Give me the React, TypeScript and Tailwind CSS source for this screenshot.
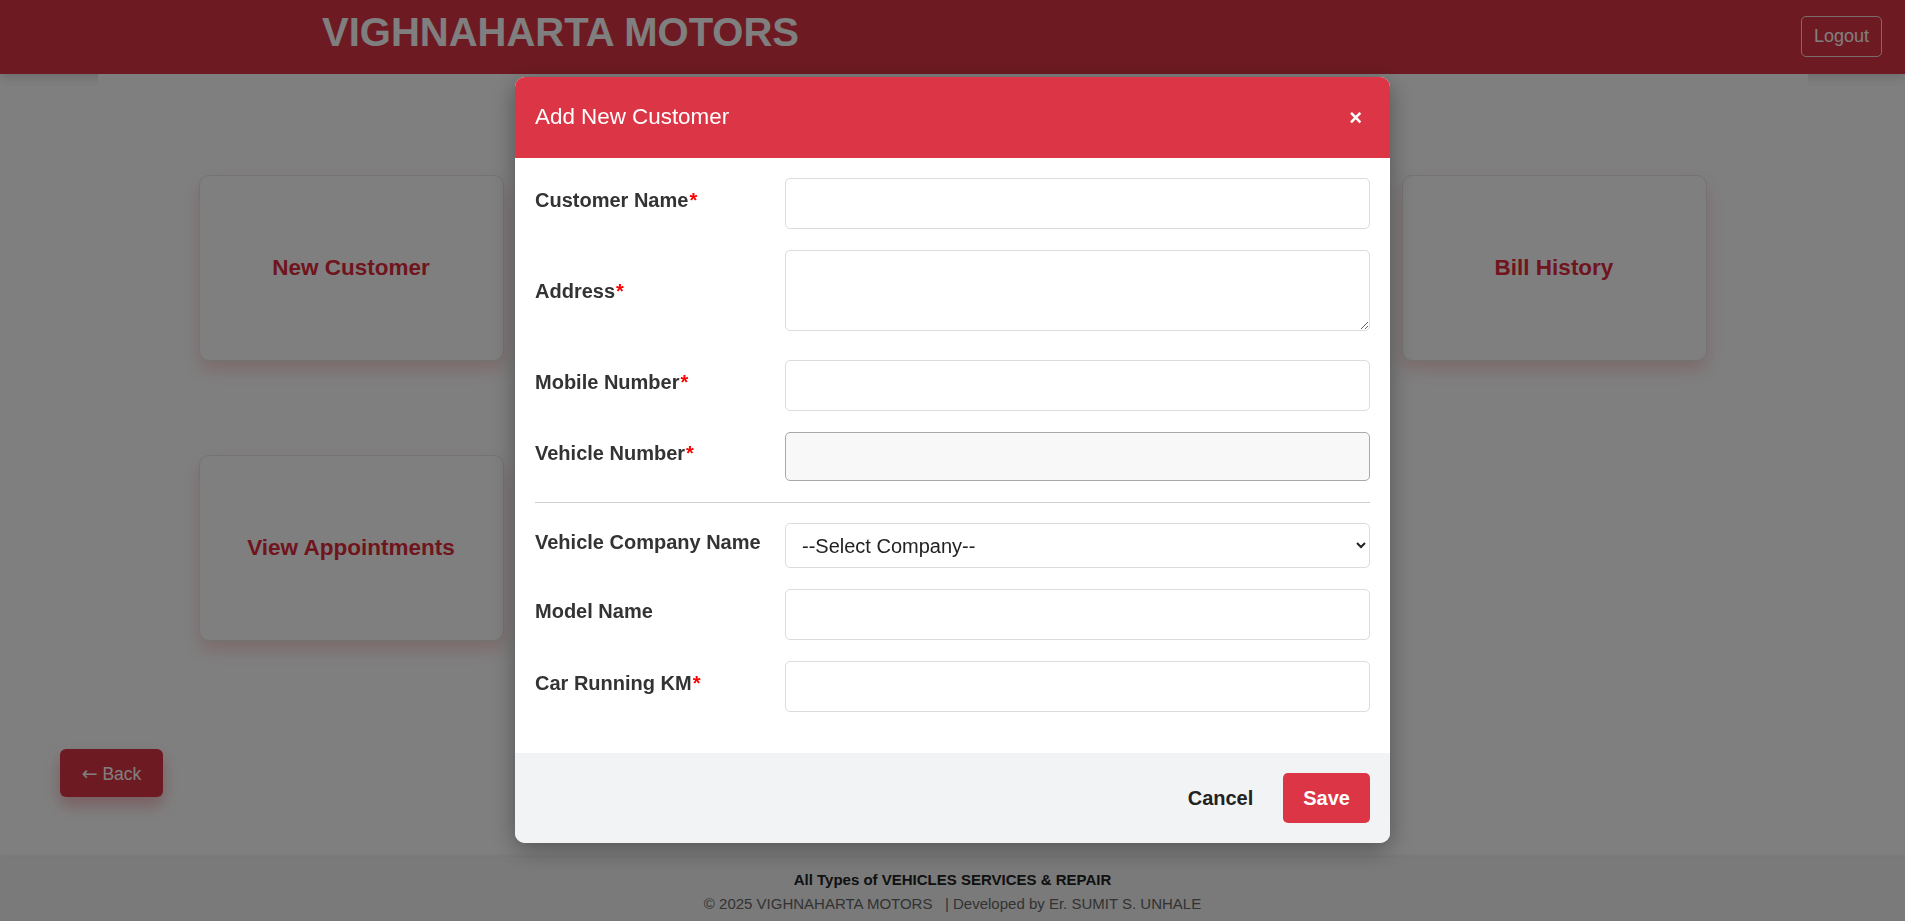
import React from "react";

const Label = ({ text, req }: { text: string; req?: boolean }) => (
  <label className="w-[250px] shrink-0 mb-[7px] text-[20px] font-bold text-[#333] leading-[24px]">
    {text}
    {req && <span className="text-[#ff0000] ml-[1px]">*</span>}
  </label>
);

const Card = ({ title }: { title?: string }) => (
  <div className="w-[305px] h-[186px] bg-white border border-[#e6e6e6] rounded-[10px] shadow-[0_9px_18px_rgba(220,53,69,0.22)] flex items-center justify-center">
    {title && <span className="text-[22.5px] font-bold text-[#e02a3c]">{title}</span>}
  </div>
);

export default function App() {
  return (
    <div className="relative min-h-screen h-[921px] flex flex-col bg-white font-['Liberation_Sans',Arial,sans-serif] overflow-hidden">
      {/* Header */}
      <header className="relative z-10 h-[74px] shrink-0 bg-[#dc3545] shadow-[0_4px_10px_rgba(0,0,0,0.15)] flex items-start justify-between">
        <h1 className="pl-[322px] pt-[12px] text-[40px] leading-none font-bold text-white">
          VIGHNAHARTA MOTORS
        </h1>
        <button className="mt-[16px] mr-[23px] h-[41px] w-[81px] border border-white/80 rounded-[5px] text-white text-[18px]">
          Logout
        </button>
      </header>

      {/* Main */}
      <main className="flex-1 flex flex-col bg-white">
        <div className="relative z-20 mx-auto w-[1710px] bg-white pt-[101px] pl-[101px]">
          <div className="grid grid-cols-[repeat(4,305px)] gap-x-[96px] gap-y-[94px]">
            <Card title="New Customer" />
            <Card />
            <Card />
            <Card title="Bill History" />
            <Card title="View Appointments" />
            <Card />
          </div>
        </div>
        <div className="pl-[60px] mt-[108px]">
          <button className="w-[103px] h-[48px] bg-[#dc3545] rounded-[6px] text-white text-[17.5px] shadow-[0_8px_16px_rgba(220,53,69,0.35)]">
            <span className="font-['DejaVu_Sans',sans-serif] text-[19px]">←</span> Back
          </button>
        </div>
      </main>

      {/* Footer */}
      <footer className="h-[64px] shrink-0 bg-[#f4f4f4] shadow-[0_-2px_3px_rgba(0,0,0,0.07)] pt-[13px] text-center">
        <p className="text-[15px] leading-[20px] font-bold text-[#222]">
          All Types of VEHICLES SERVICES &amp; REPAIR
        </p>
        <p className="text-[15px] leading-[27px] text-[#666] whitespace-pre">
          © 2025 VIGHNAHARTA MOTORS   | Developed by Er. SUMIT S. UNHALE
        </p>
      </footer>

      {/* Overlay */}
      <div className="fixed inset-0 z-40 bg-black/50" />

      {/* Modal */}
      <div className="fixed inset-0 z-50 flex justify-center items-start pt-[77px]">
        <div className="w-[875px] bg-white rounded-[10px] shadow-[0_6px_24px_rgba(0,0,0,0.35)] flex flex-col">
          <div className="h-[81px] bg-[#dc3545] rounded-t-[10px] px-[20px] flex items-center justify-between">
            <h5 className="text-[22.4px] text-white leading-none">Add New Customer</h5>
            <button className="mr-[8px] text-white text-[22px] font-bold leading-none">×</button>
          </div>

          <div className="px-[20px] pt-[20px] pb-[41px] flex flex-col">
            <div className="flex items-center mb-[21px]">
              <Label text="Customer Name" req />
              <input className="flex-1 h-[51px] border border-[#dcdcdc] rounded-[5px] bg-white px-3 text-[18px]" />
            </div>
            <div className="flex items-center mb-[21px]">
              <Label text="Address" req />
              <textarea className="flex-1 h-[81px] mb-[8px] border border-[#dcdcdc] rounded-[5px] bg-white px-3 py-2 text-[18px] block" />
            </div>
            <div className="flex items-center mb-[21px]">
              <Label text="Mobile Number" req />
              <input className="flex-1 h-[51px] border border-[#dcdcdc] rounded-[5px] bg-white px-3 text-[18px]" />
            </div>
            <div className="flex items-center mb-[21px]">
              <Label text="Vehicle Number" req />
              <input readOnly className="flex-1 h-[49px] border border-[#a8a8a8] rounded-[5px] bg-[#f8f8f8] px-3 text-[18px]" />
            </div>
            <hr className="border-0 border-t border-[#cfcfcf] mb-[20px]" />
            <div className="flex items-center mb-[21px]">
              <Label text="Vehicle Company Name" />
              <select className="flex-1 h-[45px] border border-[#dcdcdc] rounded-[5px] bg-white pl-[12px] pr-[8px] text-[20px] text-[#222]">
                <option>--Select Company--</option>
              </select>
            </div>
            <div className="flex items-center mb-[21px]">
              <Label text="Model Name" />
              <input className="flex-1 h-[51px] border border-[#dcdcdc] rounded-[5px] bg-white px-3 text-[18px]" />
            </div>
            <div className="flex items-center">
              <Label text="Car Running KM" req />
              <input className="flex-1 h-[51px] border border-[#dcdcdc] rounded-[5px] bg-white px-3 text-[18px]" />
            </div>
          </div>

          <div className="h-[90px] bg-[#f2f3f5] rounded-b-[10px] px-[20px] flex items-center justify-end gap-[14px]">
            <button className="px-[16px] h-[50px] text-[20px] font-bold text-[#222]">Cancel</button>
            <button className="px-[20px] h-[50px] bg-[#dc3545] rounded-[5px] text-[20px] font-bold text-white">
              Save
            </button>
          </div>
        </div>
      </div>
    </div>
  );
}
